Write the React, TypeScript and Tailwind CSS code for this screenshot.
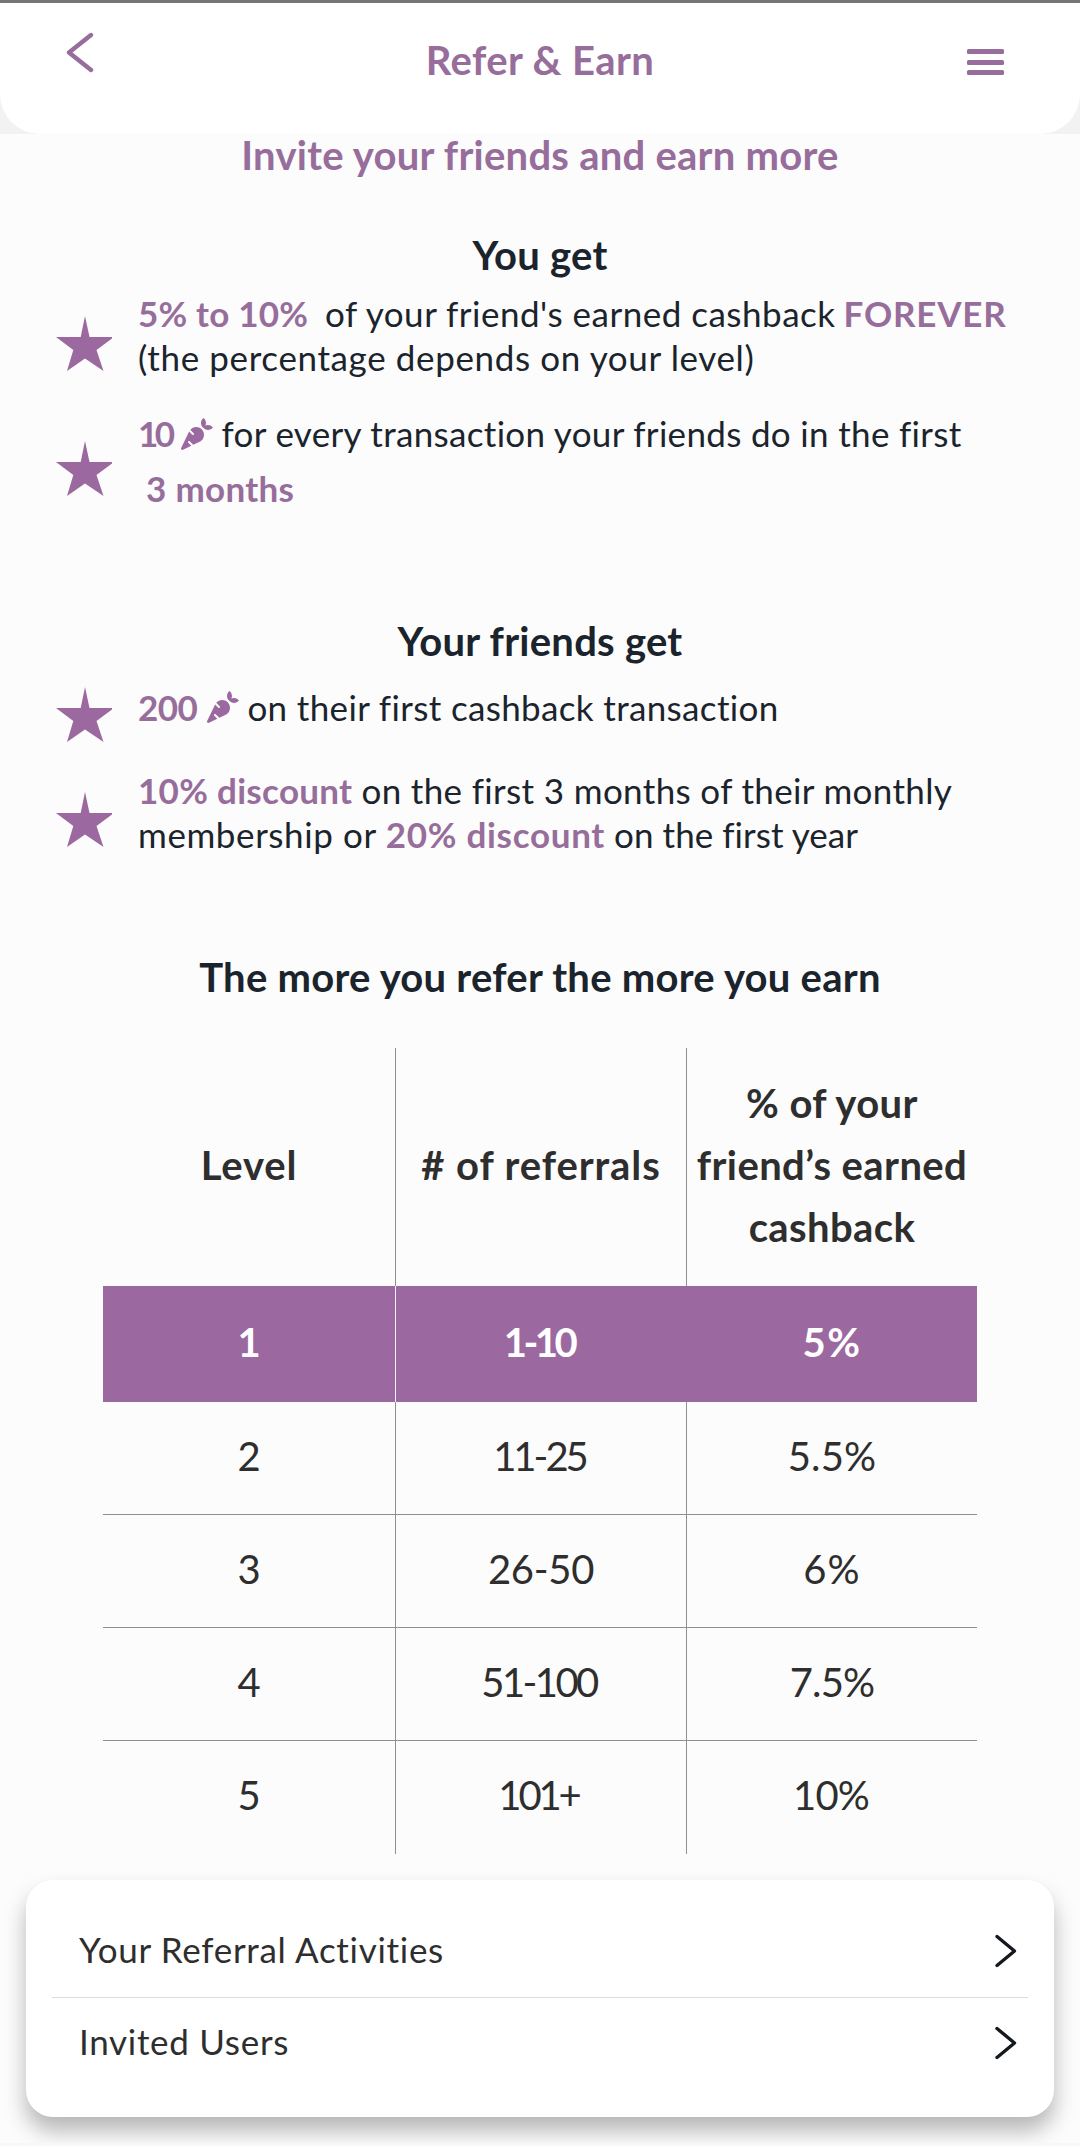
import type { ReactNode } from "react";
import clsx from "clsx";
import { FaCarrot } from "react-icons/fa";

const levels = [
  { level: "1", referrals: "1-10", percent: "5%", active: true, spacing: ["tracking-[-3.5px] pr-[5px]", "tracking-[1.5px]"] },
  { level: "2", referrals: "11-25", percent: "5.5%", spacing: ["tracking-[-3px] pr-[3px]", "tracking-[0.2px]"] },
  { level: "3", referrals: "26-50", percent: "6%", spacing: ["tracking-[-0.3px]", "tracking-[1px]"] },
  { level: "4", referrals: "51-100", percent: "7.5%", spacing: ["tracking-[-2.6px] pr-[4px]", "tracking-[-0.8px]"] },
  { level: "5", referrals: "101+", percent: "10%", spacing: ["tracking-[-3.1px] pr-[5px]", "tracking-[-0.9px] pr-[2px]"] },
];

export default function App() {
  return (
    <div className="flex h-[2146px] w-[1080px] flex-col overflow-hidden border-b-[3px] border-[#f7f7f7] bg-[#fcfcfc] font-['Lato',sans-serif] text-[#1b242c]">
      <Header />

      <main className="flex flex-col">
        <h2 className="mt-px text-center text-[40px] leading-10 font-bold tracking-[0.25px] text-[#976d9b]">
          Invite your friends and earn more
        </h2>

        {/* ── You get ── */}
        <SectionTitle className="mt-[60px]">You get</SectionTitle>
        <Perk className="mt-4" starClass="mt-[25px]">
          <p className="leading-[44px]">
            <Mark className="tracking-[0.2px]">5% to 10%</Mark>
            <span className="ml-[17px]">of your friend's earned cashback</span>
            <Mark className="ml-[8px] tracking-[0.8px]">FOREVER</Mark>
          </p>
          <p className="leading-[44px] tracking-[0.63px]">(the percentage depends on your level)</p>
        </Perk>
        <Perk className="mt-[27px]" starClass="mt-[35px]">
          <p className="flex items-center leading-[55px]">
            <Mark className="tracking-[-3.5px]">10</Mark>
            <Carrot className="ml-[9px]" />
            <span className="ml-[9px] tracking-[0.32px]">
              for every transaction your friends do in the first
            </span>
          </p>
          <p className="pl-[8px] leading-[55px]">
            <Mark className="tracking-[0.3px]">3 months</Mark>
          </p>
        </Perk>

        {/* ── Your friends get ── */}
        <SectionTitle className="mt-[105px]">Your friends get</SectionTitle>
        <Perk className="mt-[23px]" starClass="mt-[3px]">
          <p className="flex h-11 items-center pt-px leading-[44px]">
            <Mark className="tracking-[-0.5px]">200</Mark>
            <Carrot className="ml-[10px]" />
            <span className="ml-[8px] tracking-[0.35px]">on their first cashback transaction</span>
          </p>
        </Perk>
        <Perk className="mt-10" starClass="mt-6">
          <p className="leading-[44px]">
            <Mark className="tracking-[0.3px]">10% discount</Mark>
            <span className="ml-[9px] tracking-[0.35px]">
              on the first 3 months of their monthly
            </span>
          </p>
          <p className="leading-[44px]">
            <span className="tracking-[0.6px]">membership or</span>
            <Mark className="ml-[9px] tracking-[0.7px]">20% discount</Mark>
            <span className="ml-[9px] tracking-[0.05px]">on the first year</span>
          </p>
        </Perk>

        {/* ── Levels ── */}
        <SectionTitle className="mt-[101px]">The more you refer the more you earn</SectionTitle>
        <LevelTable />
      </main>

      <nav className="mx-[26px] mt-[26px] flex h-[237px] shrink-0 flex-col rounded-[27px] bg-white px-[26px] pt-[25px] shadow-[0_14px_22px_rgba(0,0,0,0.28)]">
        <MenuRow label="Your Referral Activities" className="h-[93px] border-b border-[#dcdcdc]" />
        <MenuRow label="Invited Users" className="h-[90px]" />
      </nav>
    </div>
  );
}

function Header() {
  return (
    <div className="h-[134px] shrink-0 border-t-[3px] border-[#777575] bg-[#f2f2f2]">
      <header className="grid h-full grid-cols-[1fr_auto_1fr] items-start rounded-b-[40px] bg-white px-[66px] text-[#976d9b]">
        <svg className="mt-[29px]" width="28" height="41" viewBox="0 0 28 41" fill="none">
          <path
            d="M25 3 3 20.5 25 38"
            stroke="currentColor"
            strokeWidth="4.4"
            strokeLinecap="round"
            strokeLinejoin="round"
          />
        </svg>
        <h1 className="mt-[33px] text-[40px] leading-[48px] font-bold tracking-[0.4px]">
          Refer &amp; Earn
        </h1>
        <div className="mt-[46px] mr-[10px] flex flex-col gap-[5.5px] justify-self-end">
          <span className="h-[5px] w-[37px] rounded-[1.5px] bg-current" />
          <span className="h-[5px] w-[37px] rounded-[1.5px] bg-current" />
          <span className="h-[5px] w-[37px] rounded-[1.5px] bg-current" />
        </div>
      </header>
    </div>
  );
}

function SectionTitle({ children, className }: { children: ReactNode; className?: string }) {
  return (
    <h3
      className={clsx("text-center text-[40px] leading-10 font-bold tracking-[0.25px]", className)}
    >
      {children}
    </h3>
  );
}

function Mark({ children, className }: { children: ReactNode; className?: string }) {
  return <span className={clsx("font-bold text-[#976d9b]", className)}>{children}</span>;
}

function Perk({
  children,
  className,
  starClass,
}: {
  children: ReactNode;
  className?: string;
  starClass: string;
}) {
  return (
    <div className={clsx("flex items-start pl-14", className)}>
      <Star className={starClass} />
      <div className="ml-[26px] text-[35px] tracking-[0.5px] whitespace-nowrap">{children}</div>
    </div>
  );
}

function Star({ className }: { className?: string }) {
  return (
    <svg
      className={clsx("-mb-8 shrink-0 text-[#9b69a0]", className)}
      width="56"
      height="56"
      viewBox="0 0 56 56"
      fill="currentColor"
    >
      <path d="M29 0 33.5 21H58L40.5 34 47.5 55 29 42.5 11 55 17.3 34 0 21H24.7Z" />
    </svg>
  );
}

function Carrot({ className }: { className?: string }) {
  return <FaCarrot size={32} className={clsx("shrink-0 text-[#9b69a0]", className)} />;
}

function LevelTable() {
  return (
    <div className="mx-[103px] mt-[51px] flex flex-col text-center text-[40px] text-[#2e2e2e]">
      <div className="grid h-[238px] grid-cols-[293px_291px_290px] leading-[62px] font-bold tracking-[0.4px]">
        <div className="flex items-center justify-center border-r border-[#8f8f8f] pb-[5px] tracking-[0.8px]">
          Level
        </div>
        <div className="flex items-center justify-center border-r border-[#8f8f8f] pb-[5px] tracking-[0.9px]">
          # of referrals
        </div>
        <div className="flex items-center justify-center pb-[5px] whitespace-nowrap">
          <span>
            % of your
            <br />
            friend’s earned
            <br />
            cashback
          </span>
        </div>
      </div>

      {levels.map((row) => (
        <div
          key={row.level}
          className={clsx(
            "grid grid-cols-[293px_291px_290px]",
            row.active
              ? "h-[116px] bg-[#9b69a0] font-bold text-white"
              : "h-[113px] border-b border-[#8f8f8f] last:border-b-0",
          )}
        >
          <Cell className={row.active ? "border-r border-[#f6eff7]" : "border-r border-[#8f8f8f]"}>
            {row.level}
          </Cell>
          <Cell className={clsx(row.spacing[0], !row.active && "border-r border-[#8f8f8f]")}>
            {row.referrals}
          </Cell>
          <Cell className={row.spacing[1]}>{row.percent}</Cell>
        </div>
      ))}
    </div>
  );
}

function Cell({ children, className }: { children: ReactNode; className?: string }) {
  return <div className={clsx("flex items-center justify-center pb-[5px]", className)}>{children}</div>;
}

function MenuRow({ label, className }: { label: string; className?: string }) {
  return (
    <div
      className={clsx(
        "flex items-center justify-between pr-[10px] pl-[27px] text-[35px] tracking-[0.7px] text-[#2e2e2e]",
        className,
      )}
    >
      <span className="pb-[3px]">{label}</span>
      <svg width="24" height="34" viewBox="0 0 24 34" fill="none">
        <path
          d="M3 2.5 20.5 17 3 31.5"
          stroke="#14181f"
          strokeWidth="3.4"
          strokeLinecap="round"
          strokeLinejoin="round"
        />
      </svg>
    </div>
  );
}
